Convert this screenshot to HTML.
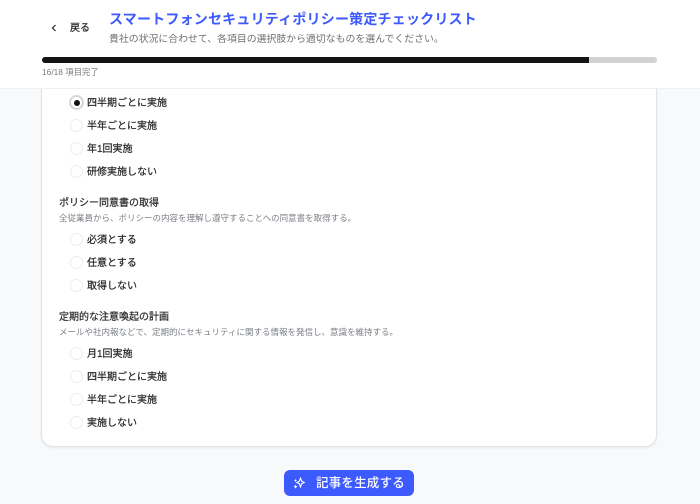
<!DOCTYPE html>
<html lang="ja"><head><meta charset="utf-8">
<style>
*{box-sizing:border-box;margin:0;padding:0}
html,body{width:700px;height:504px;overflow:hidden;background:#f8f9fb;font-family:"Liberation Sans","Noto Sans CJK JP",sans-serif}
#w{position:absolute;left:0;top:0;width:700px;height:504px;filter:blur(.3px)}
.abs{position:absolute;white-space:nowrap}
#hdr{position:absolute;left:0;top:0;width:700px;height:89px;background:#fff;border-bottom:1px solid #f0f0f2;z-index:2}
#card{position:absolute;left:41px;top:60px;width:616px;height:387px;background:#fff;border:1px solid #e2e3e6;border-radius:12px;box-shadow:0 1px 2px rgba(0,0,0,.07)}
.r{position:absolute;left:70px;width:13px;height:13px;border-radius:50%;border:1px solid #ececee;background:#fff}
.l{position:absolute;left:87px;font-size:10px;line-height:14px;color:#222;font-weight:400;-webkit-text-stroke:.2px #222;white-space:nowrap}
.h{position:absolute;left:59px;font-size:10px;line-height:14px;color:#2a2a2a;font-weight:400;-webkit-text-stroke:.2px #2a2a2a;white-space:nowrap}
.d{position:absolute;left:59px;font-size:8.5px;line-height:12px;color:#7b7f86;white-space:nowrap}
</style></head><body>
<div id="w">
<div id="card"></div>
<div id="hdr">
<svg class="abs" style="left:50px;top:23px" width="8" height="10" viewBox="0 0 8 10"><path d="M5.500 2 L2.500 5 L5.500 8" fill="none" stroke="#222" stroke-width="1.200"/></svg>
<div class="abs" style="left:70px;top:21.500px;font-size:10px;line-height:14px;color:#222;font-weight:400;-webkit-text-stroke:.2px #222">戻る</div>
<div class="abs" style="left:109px;top:8.500px;font-size:14px;line-height:20px;color:#3d5afe;font-weight:700;letter-spacing:.2px">スマートフォンセキュリティポリシー策定チェックリスト</div>
<div class="abs" style="left:109px;top:31.500px;font-size:9.900px;line-height:15px;color:#6d7075">貴社の状況に合わせて、各項目の選択肢から適切なものを選んでください。</div>
<div class="abs" style="left:42px;top:57px;width:615px;height:6px;border-radius:3px;background:#d2d2d2;overflow:hidden"><div style="width:547px;height:6px;background:#141414"></div></div>
<div class="abs" style="left:42px;top:66px;font-size:8.400px;line-height:12px;color:#7b7b7b">16/18 項目完了</div>
</div>
<div class="r" style="top:96px;left:70px;border:1px solid #d4d4d4;box-shadow:0 0 0 1px #d8d8d8"></div>
<div class="abs" style="left:73.500px;top:99.500px;width:6px;height:6px;border-radius:50%;background:#111"></div>
<div class="l" style="top:97px">四半期ごとに実施</div>
<div class="r" style="top:119px"></div><div class="l" style="top:120px">半年ごとに実施</div>
<div class="r" style="top:142px"></div><div class="l" style="top:143px">年1回実施</div>
<div class="r" style="top:165px"></div><div class="l" style="top:166px">研修実施しない</div>
<div class="h" style="top:196.500px">ポリシー同意書の取得</div>
<div class="d" style="top:212px">全従業員から、ポリシーの内容を理解し遵守することへの同意書を取得する。</div>
<div class="r" style="top:233px"></div><div class="l" style="top:234px">必須とする</div>
<div class="r" style="top:256px"></div><div class="l" style="top:257px">任意とする</div>
<div class="r" style="top:279px"></div><div class="l" style="top:280px">取得しない</div>
<div class="h" style="top:310.500px">定期的な注意喚起の計画</div>
<div class="d" style="top:326px">メールや社内報などで、定期的にセキュリティに関する情報を発信し、意識を維持する。</div>
<div class="r" style="top:347px"></div><div class="l" style="top:348px">月1回実施</div>
<div class="r" style="top:370px"></div><div class="l" style="top:371px">四半期ごとに実施</div>
<div class="r" style="top:393px"></div><div class="l" style="top:394px">半年ごとに実施</div>
<div class="r" style="top:416px"></div><div class="l" style="top:417px">実施しない</div>
<div class="abs" style="left:284px;top:470px;width:130px;height:26px;border-radius:6px;background:#3d5afe"></div>
<svg class="abs" style="left:293px;top:477px" width="12" height="12" viewBox="0 0 12 12"><path d="M7.500 1.200 L8.700 4.300 L11.200 5.500 L8.700 6.700 L7.500 9.800 L6.300 6.700 L3.800 5.500 L6.300 4.300Z" fill="none" stroke="#fff" stroke-width="1.100"/><path d="M2.500 7.500 L3.200 9 L4.500 9.700 L3.200 10.400 L2.500 11.800 L1.800 10.400 L.5 9.700 L1.800 9Z" fill="#fff"/><path d="M2.500 2 L3 3 L4 3.500 L3 4 L2.500 5 L2 4 L1 3.500 L2 3Z" fill="#fff"/></svg>
<div class="abs" style="left:316px;top:474px;font-size:12.500px;line-height:18px;color:#fff;font-weight:500;letter-spacing:.2px">記事を生成する</div>
</div>
</body></html>
